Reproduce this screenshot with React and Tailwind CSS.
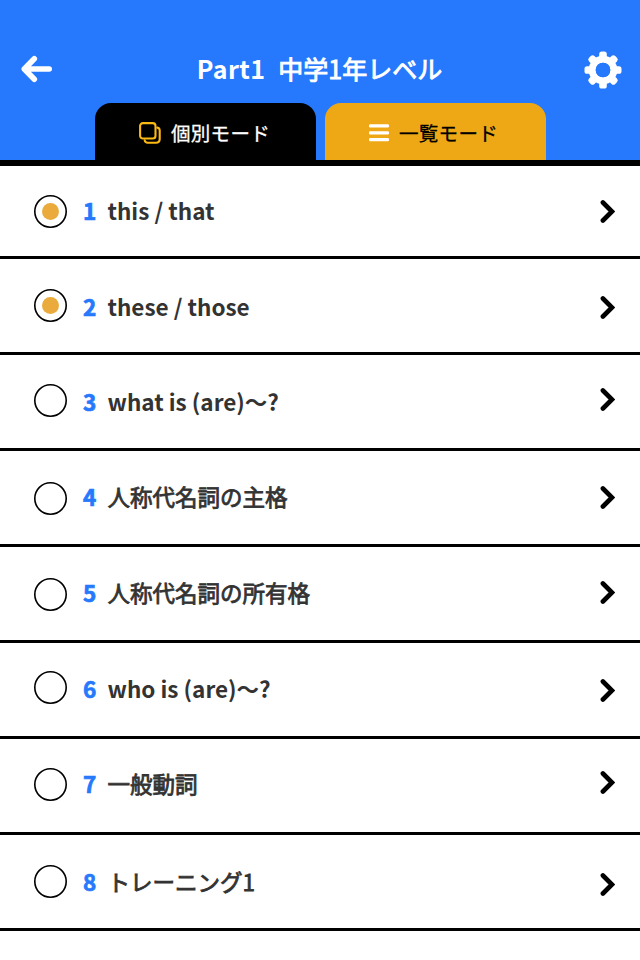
import { clsx } from 'clsx'

const lessons = [
  { id: 1, title: 'this / that', checked: true, circle: 'mt-[29px]', text: 'mt-[26px]', arrow: 'mt-[34px]' },
  { id: 2, title: 'these / those', checked: true, circle: 'mt-[29.5px]', text: 'mt-[29px]', arrow: 'mt-[37px]' },
  { id: 3, title: 'what is (are)〜?', circle: 'mt-[28.5px]', text: 'mt-[28px]', arrow: 'mt-[33px]' },
  { id: 4, title: '人称代名詞の主格', kanji: true, circle: 'mt-[30.5px]', text: 'mt-[27px]', arrow: 'mt-[35px]' },
  { id: 5, title: '人称代名詞の所有格', kanji: true, circle: 'mt-[30.5px]', text: 'mt-[27px]', arrow: 'mt-[34px]' },
  { id: 6, title: 'who is (are)〜?', circle: 'mt-[28px]', text: 'mt-[27px]', arrow: 'mt-[36px]' },
  { id: 7, title: '一般動詞', kanji: true, circle: 'mt-[29px]', text: 'mt-[26px]', arrow: 'mt-[32px]' },
  { id: 8, title: 'トレーニング1', kanji: true, circle: 'mt-[29.5px]', text: 'mt-[28px]', arrow: 'mt-[38px]' },
]

function BackIcon() {
  return (
    <svg width="32" height="28" viewBox="0 0 32 28" fill="none" stroke="#fff" strokeWidth="5.6" strokeLinecap="round" strokeLinejoin="round">
      <path d="M13.3 3.7 3.3 14 13.3 24.3M4 14H28.2" />
    </svg>
  )
}

function GearIcon() {
  const teeth = [0, 45, 90, 135]
  return (
    <svg width="38" height="38" viewBox="-19 -19 38 38">
      {teeth.map((angle) => (
        <rect key={angle} x="-3.8" y="-18.5" width="7.6" height="37" rx="2.6" fill="#fff" transform={`rotate(${angle})`} />
      ))}
      <circle r="10.8" fill="#2679fc" stroke="#fff" strokeWidth="7" />
      <circle r="7.3" fill="#2679fc" />
    </svg>
  )
}

function CardsIcon() {
  return (
    <svg width="22" height="22" viewBox="0 0 22 22" fill="none" stroke="#fdb913" strokeWidth="2.1" strokeLinecap="round">
      <rect x="1.1" y="1.1" width="15.4" height="15.4" rx="2.8" />
      <path d="M18.3 5.6c1.6.3 2.4 1.2 2.4 2.8v8.6c0 2.5-1.2 3.7-3.7 3.7H8.6c-1.6 0-2.6-.8-2.9-2.3" />
    </svg>
  )
}

function ListIcon() {
  return (
    <svg width="20" height="18" viewBox="0 0 20 18" fill="#fff">
      <rect y="0.3" width="20" height="3.2" rx="1.2" />
      <rect y="7.2" width="20" height="3.2" rx="1.2" />
      <rect y="14.1" width="20" height="3.2" rx="1.2" />
    </svg>
  )
}

function LessonRow({ lesson, first }) {
  return (
    <li className={clsx('flex items-start border-b-3 border-black pl-[34px] pr-[25px]', first ? 'h-[93px]' : 'h-24')}>
      <span className={clsx('flex size-[33px] shrink-0 items-center justify-center rounded-full', lesson.circle)}>
        <svg width="33" height="33" viewBox="0 0 33 33">
          <circle cx="16.5" cy="16.5" r="15.7" fill="#fff" stroke="#000" strokeWidth="1.6" />
          {lesson.checked && <circle cx="16.5" cy="16.5" r="8.5" fill="#eaaa3c" />}
        </svg>
      </span>
      <div className={clsx('flex h-9 flex-1 items-center pl-4 text-[22.5px] leading-9 font-bold whitespace-pre', lesson.text)}>
        <span className="w-[24.5px] text-[#2679fc] [-webkit-text-stroke:0.7px_#2679fc]">{lesson.id}</span>
        <span className={clsx('text-[#333]', lesson.kanji && 'font-normal [-webkit-text-stroke:0.8px_#333]')}>{lesson.title}</span>
      </div>
      <svg className={clsx('shrink-0', lesson.arrow)} width="15" height="23" viewBox="0 0 15 23" fill="none" stroke="#000" strokeWidth="4.6" strokeLinecap="round">
        <path d="M2.9 2.5 11.9 11.5 2.9 20.5" strokeLinejoin="miter" />
      </svg>
    </li>
  )
}

export default function App() {
  return (
    <div className="h-[960px] w-[640px] overflow-hidden bg-white font-['Noto_Sans_CJK_JP',sans-serif]" lang="ja">
      <header className="flex h-[166px] flex-col border-b-6 border-black bg-[#2679fc]">
        <div className="flex h-[103px] shrink-0 items-end justify-between pr-[18px] pl-[21px]">
          <button className="mb-5" aria-label="戻る">
            <BackIcon />
          </button>
          <h1 className="mb-[15px] ml-[2px] flex gap-[13px] text-[25px] leading-10 text-white">
            <span className="font-bold tracking-[0.4px]">Part1</span>
            <span className="font-normal [-webkit-text-stroke:0.9px_#fff]">中学1年レベル</span>
          </h1>
          <button className="mb-[14.5px]" aria-label="設定">
            <GearIcon />
          </button>
        </div>
        <nav className="flex h-[57px] gap-[9px] pl-[95px] text-[19.5px]">
          <button className="flex w-[221px] items-center rounded-t-2xl bg-black pt-[3px] pl-11 text-white">
            <CardsIcon />
            <span className="ml-[10px] tracking-[0.3px] [-webkit-text-stroke:0.3px_#fff]">個別モード</span>
          </button>
          <button className="flex w-[221px] items-center rounded-t-2xl bg-[#efa815] pt-[3px] pl-11 text-black">
            <ListIcon />
            <span className="ml-[10px] tracking-[0.3px] [-webkit-text-stroke:0.3px_#000]">一覧モード</span>
          </button>
        </nav>
      </header>
      <ul>
        {lessons.map((lesson, index) => (
          <LessonRow key={lesson.id} lesson={lesson} first={index === 0} />
        ))}
      </ul>
    </div>
  )
}
